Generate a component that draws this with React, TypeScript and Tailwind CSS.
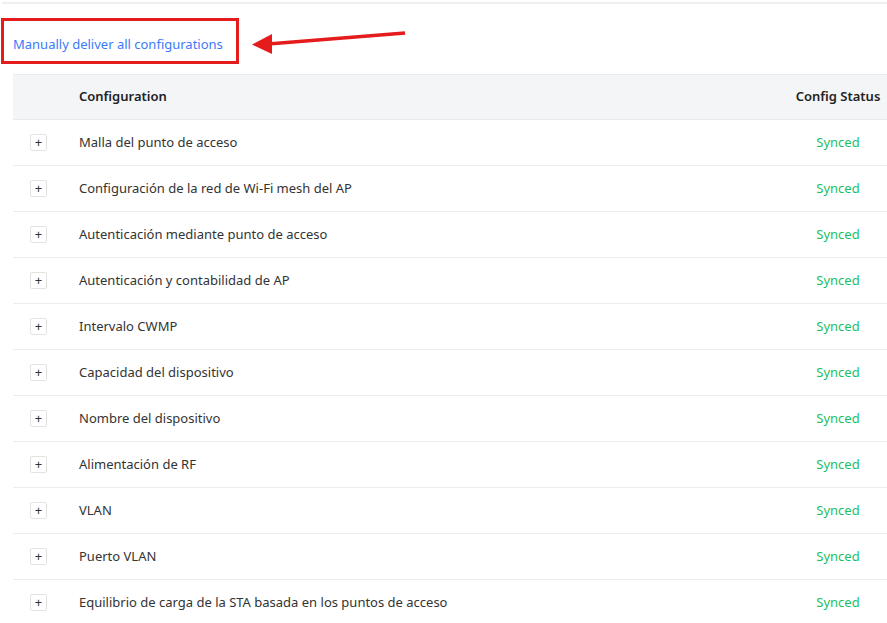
const rows = [
  'Malla del punto de acceso',
  'Configuración de la red de Wi-Fi mesh del AP',
  'Autenticación mediante punto de acceso',
  'Autenticación y contabilidad de AP',
  'Intervalo CWMP',
  'Capacidad del dispositivo',
  'Nombre del dispositivo',
  'Alimentación de RF',
  'VLAN',
  'Puerto VLAN',
  'Equilibrio de carga de la STA basada en los puntos de acceso',
];

function PlusBox() {
  return (
    <span className="flex h-[17px] w-[17px] items-center justify-center rounded-[2px] border border-[#e3e3e3] bg-white text-[13px] leading-none text-[#333]">
      +
    </span>
  );
}

export default function App() {
  return (
    <div
      className="relative h-[623px] w-[887px] overflow-hidden bg-white text-[13px] text-[#333]"
      style={{ fontFamily: '"Noto Sans", "Open Sans", sans-serif' }}
    >
      <div className="ml-[2px] mt-[2px] h-[2px] bg-[#efefef]" />

      <div className="ml-[1px] mt-[14px] flex h-[46px] w-[238px] items-center border-[3px] border-[#e41c1c] pl-[9px] pt-[8px]">
        <a className="cursor-pointer text-[13px] text-[#3a7bf7]">Manually deliver all configurations</a>
      </div>

      <svg className="absolute left-[248px] top-[28px]" width="162" height="30" viewBox="0 0 162 30">
        <line x1="157" y1="5" x2="20" y2="16" stroke="#e41c1c" strokeWidth="3.5" />
        <polygon points="4,16.5 24,6 24,26" fill="#e41c1c" />
      </svg>

      <div className="ml-[13px] mt-[10px] w-[874px]">
        <div className="grid h-[46px] grid-cols-[66px_1fr_98px] items-center border-y border-[#e8eaee] bg-[#f4f5f7] font-semibold text-[#222]">
          <div />
          <div>Configuration</div>
          <div className="text-center">Config Status</div>
        </div>
        {rows.map((r) => (
          <div key={r} className="grid h-[46px] grid-cols-[66px_1fr_98px] items-center border-b border-[#ececec]">
            <div className="pl-[17px]">
              <PlusBox />
            </div>
            <div>{r}</div>
            <div className="text-center text-[#1bbf5f]">Synced</div>
          </div>
        ))}
      </div>
    </div>
  );
}
